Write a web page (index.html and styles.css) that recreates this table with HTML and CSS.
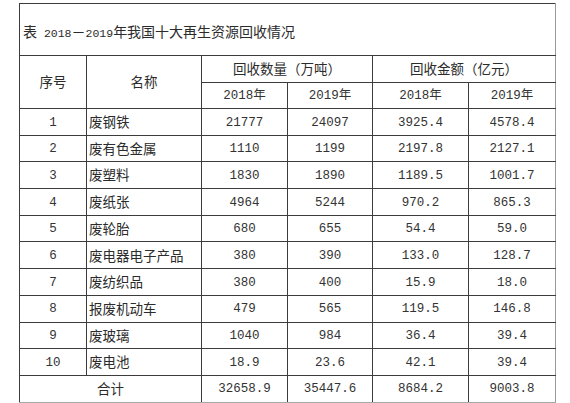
FILE: index.html
```html
<!DOCTYPE html>
<html>
<head>
  <meta charset="UTF-8">
  <title>2018-2019年我国十大再生资源回收情况</title>
  <link rel="stylesheet" href="styles.css">
</head>
<body>

  <table class="stats">
    <colgroup>
      <col class="col-no">
      <col class="col-name">
      <col class="col-qty1">
      <col class="col-qty2">
      <col class="col-amt1">
      <col class="col-amt2">
    </colgroup>
    <tr class="title-row">
      <td colspan="6" class="title">表<span class="digits"> 2018</span>－<span class="digits">2019</span>年我国十大再生资源回收情况</td>
    </tr>
    <tr class="head">
      <th rowspan="2">序号</th>
      <th rowspan="2">名称</th>
      <th colspan="2">回收数量（万吨）</th>
      <th colspan="2">回收金额（亿元）</th>
    </tr>
    <tr class="head sub">
      <th class="num">2018年</th>
      <th class="num">2019年</th>
      <th class="num">2018年</th>
      <th class="num">2019年</th>
    </tr>
    <tr>
      <td class="num">1</td><td class="name">废钢铁</td>
      <td class="num">21777</td><td class="num">24097</td><td class="num">3925.4</td><td class="num">4578.4</td>
    </tr>
    <tr>
      <td class="num">2</td><td class="name">废有色金属</td>
      <td class="num">1110</td><td class="num">1199</td><td class="num">2197.8</td><td class="num">2127.1</td>
    </tr>
    <tr>
      <td class="num">3</td><td class="name">废塑料</td>
      <td class="num">1830</td><td class="num">1890</td><td class="num">1189.5</td><td class="num">1001.7</td>
    </tr>
    <tr>
      <td class="num">4</td><td class="name">废纸张</td>
      <td class="num">4964</td><td class="num">5244</td><td class="num">970.2</td><td class="num">865.3</td>
    </tr>
    <tr>
      <td class="num">5</td><td class="name">废轮胎</td>
      <td class="num">680</td><td class="num">655</td><td class="num">54.4</td><td class="num">59.0</td>
    </tr>
    <tr>
      <td class="num">6</td><td class="name">废电器电子产品</td>
      <td class="num">380</td><td class="num">390</td><td class="num">133.0</td><td class="num">128.7</td>
    </tr>
    <tr>
      <td class="num">7</td><td class="name">废纺织品</td>
      <td class="num">380</td><td class="num">400</td><td class="num">15.9</td><td class="num">18.0</td>
    </tr>
    <tr>
      <td class="num">8</td><td class="name">报废机动车</td>
      <td class="num">479</td><td class="num">565</td><td class="num">119.5</td><td class="num">146.8</td>
    </tr>
    <tr>
      <td class="num">9</td><td class="name">废玻璃</td>
      <td class="num">1040</td><td class="num">984</td><td class="num">36.4</td><td class="num">39.4</td>
    </tr>
    <tr>
      <td class="num">10</td><td class="name">废电池</td>
      <td class="num">18.9</td><td class="num">23.6</td><td class="num">42.1</td><td class="num">39.4</td>
    </tr>
    <tr class="total">
      <td colspan="2" class="label">合计</td>
      <td class="num">32658.9</td><td class="num">35447.6</td><td class="num">8684.2</td><td class="num">9003.8</td>
    </tr>
  </table>

</body>
</html>
```

FILE: styles.css
```css
body {
  margin: 3px 0 0 19px;
  background-color: #ffffff;
  color: #2b2b2b;
  font-family: "Noto Sans CJK SC", sans-serif;
  font-size: 13.5px;
}
.stats {
  border-collapse: collapse;
  table-layout: fixed;
  width: 536px;
}
.col-no { width: 67px; }
.col-name { width: 115px; }
.col-qty1 { width: 86px; }
.col-qty2 { width: 85px; }
.col-amt1 { width: 96px; }
.col-amt2 { width: 87px; }

.stats td,
.stats th {
  border: 1px solid #3c3c3c;
  padding: 0;
  text-align: center;
  font-weight: normal;
  line-height: 1;
}
.stats tr {
  height: 26.7px;
}
.stats td:last-child,
.stats th:last-child {
  border-right-color: #9a9a9a;
}
.stats .total td {
  border-bottom-color: #a8a8a8;
}

.title-row {
  height: 52px !important;
}
.title {
  text-align: left !important;
  padding: 4px 0 0 3px !important;
  font-size: 14px;
}
.digits {
  font-family: "Liberation Mono", monospace;
  font-size: 11.5px;
}

.head {
  height: 27px !important;
}
.head.sub {
  height: 26px !important;
}

.num {
  font-family: "Liberation Mono", "Noto Sans CJK SC", monospace;
  font-size: 12.5px;
  color: #333;
  padding-top: 2px !important;
}
.name {
  text-align: left !important;
  padding-left: 2px !important;
  font-size: 13.5px;
}
.label {
  font-size: 13.5px;
}
```
